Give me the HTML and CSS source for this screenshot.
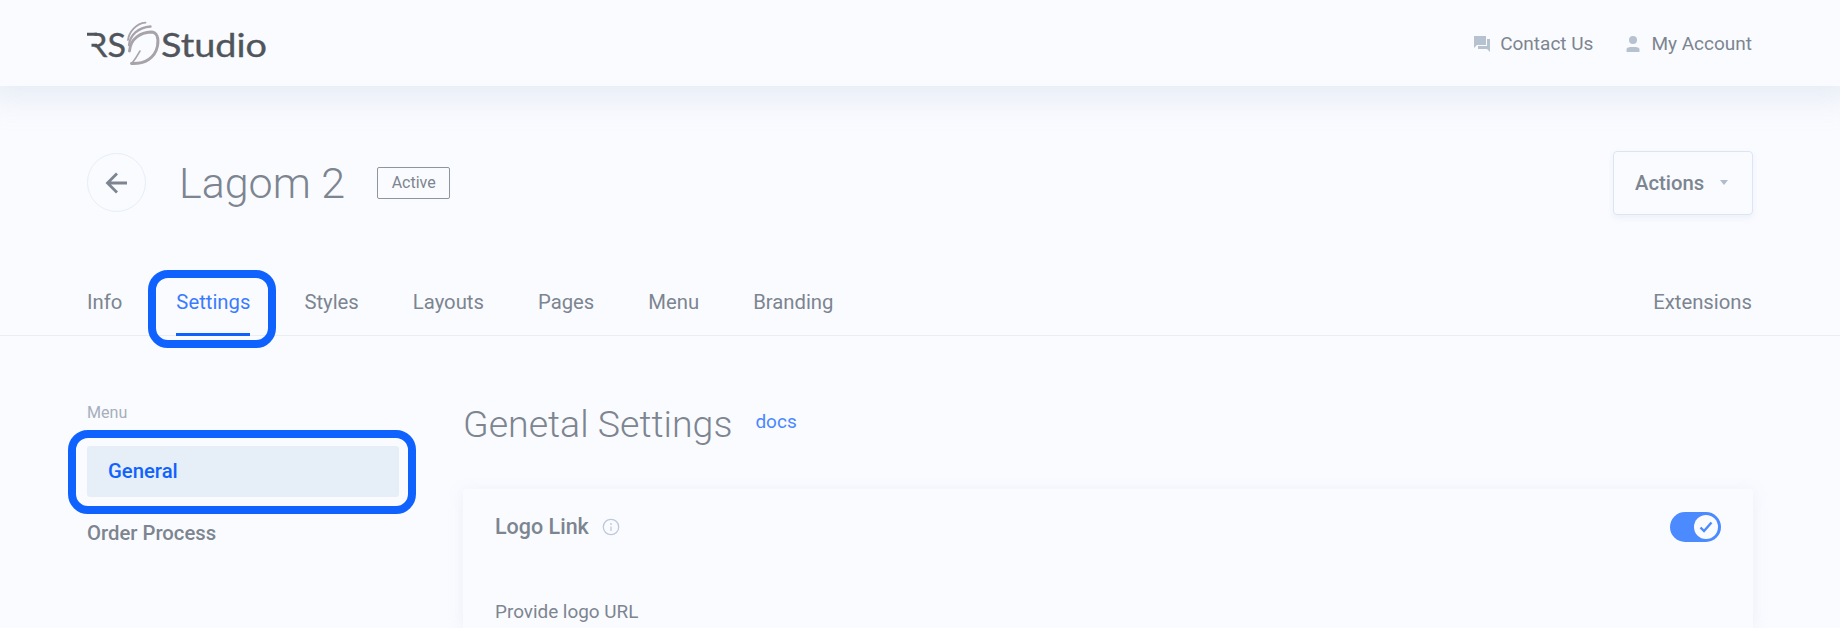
FILE: index.html
```html
<!DOCTYPE html>
<html lang="en">
<head>
<meta charset="utf-8">
<title>Lagom 2 - Settings</title>
<link rel="stylesheet" href="styles.css">
</head>
<body>
<header class="topbar">
  <svg class="logo" width="184" height="52" viewBox="0 0 184 52" role="img" aria-label="RS Studio">
    <g class="logo-text">
      <text x="-1" y="36.5" textLength="21.500" lengthAdjust="spacingAndGlyphs">R</text>
      <text x="20.500" y="36.5" textLength="18.500" lengthAdjust="spacingAndGlyphs">S</text>
      <text x="74" y="36.5" textLength="106" lengthAdjust="spacingAndGlyphs">Studio</text>
    </g>
    <rect class="logo-gap" x="-1" y="9" width="8.500" height="30"/>
    <path class="logo-bar" d="M0 14.200H10M4.500 25.300H10"/>
    <g class="logo-leaf">
      <path d="M41 20C42 12 49 3.500 58.500 2.700" stroke-width="1.800"/>
      <path d="M42 25C43 15 51 7.500 63.500 6.500" stroke-width="2.300"/>
      <path d="M42.500 31C43.500 18 54 12.500 64 12C70 12 72 18 70.500 26C68 38 58 44 44.500 43.500" stroke-width="2.900"/>
      <path d="M44.500 43.500C48 40 50.500 35 53 31" stroke-width="1.500"/>
    </g>
  </svg>
  <nav class="account">
    <a class="account-link"><svg width="18" height="18" viewBox="0 0 18 18"><path d="M1 1h12v9H4l-3 3zM14 4h3v13l-3-3H5v-3h9z"/></svg>Contact Us</a>
    <a class="account-link user"><svg width="14" height="18" viewBox="0 0 14 18"><circle cx="7" cy="5" r="4"/><path d="M0.500 17v-2.500C0.500 12.500 3 12 7 12s6.500 .5 6.500 2.500V17z"/></svg>My Account</a>
  </nav>
</header>
<main>
  <section class="title-row">
    <a class="back"><svg width="24" height="24" viewBox="0 0 24 24"><path d="M22 12H3M12 2.500L2.500 12L12 21.500"/></svg></a>
    <h1>Lagom 2</h1>
    <span class="badge">Active</span>
    <button class="actions">Actions<i class="caret"></i></button>
  </section>
  <nav class="tabs">
    <a>Info</a>
    <a class="current">Settings</a>
    <a>Styles</a>
    <a>Layouts</a>
    <a>Pages</a>
    <a>Menu</a>
    <a>Branding</a>
    <a class="last">Extensions</a>
  </nav>
  <div class="content">
    <aside class="sidebar">
      <div class="caption">Menu</div>
      <a class="item selected">General</a>
      <a class="item">Order Process</a>
    </aside>
    <section class="panel">
      <div class="panel-head"><h2>Genetal Settings</h2><a class="docs">docs</a></div>
      <div class="card">
        <div class="card-head">
          <span class="card-title">Logo Link</span>
          <svg class="info" width="18" height="18" viewBox="0 0 18 18"><circle cx="9" cy="9" r="7.700"/><path d="M9 5v2M9 8.500v4.500"/></svg>
          <span class="toggle"><span class="knob"><svg width="14" height="12" viewBox="0 0 14 12"><path d="M1.500 6.500L5 10L12.500 1.500"/></svg></span></span>
        </div>
        <div class="label">Provide logo URL</div>
      </div>
    </section>
  </div>
</main>
</body>
</html>
```
FILE: styles.css
```css
* { box-sizing: border-box; }
body {
  margin: 0;
  height: 628px;
  overflow: hidden;
  background: #fafbff;
  color: #7c8590;
  font-family: Roboto, "Liberation Sans", sans-serif;
  font-size: 20.3px;
}
h1, h2 { margin: 0; font-weight: 300; }

.topbar {
  position: relative;
  display: flex;
  align-items: flex-start;
  justify-content: space-between;
  height: 86px;
  padding: 20px 88px 0 87px;
  background: #fafbff;
  box-shadow: 0 0 30px 14px rgba(160, 178, 205, .2);
}
.logo { display: block; }
.logo-text { fill: #50555c; stroke: #50555c; stroke-width: .35; font: 400 33px Lato, sans-serif; }
.logo-gap { fill: #fafbff; }
.logo-bar { stroke: #50555c; stroke-width: 3; fill: none; }
.logo-leaf { fill: none; stroke: #a8a3ab; stroke-linecap: round; stroke-linejoin: round; }
.account { display: flex; gap: 33px; font-size: 19px; line-height: 22px; padding-top: 12.5px; }
.account-link { display: flex; align-items: center; gap: 9px; }
.account-link.user { gap: 11px; }
.account-link svg { fill: #b7c2d0; }

.title-row { display: flex; align-items: center; height: 193px; padding: 0 87px; }
.back {
  display: flex;
  align-items: center;
  justify-content: center;
  width: 59px;
  height: 59px;
  border: 1px solid #e6eef8;
  border-radius: 50%;
}
.back svg { fill: none; stroke: #7c8590; stroke-width: 2.8; }
h1 { margin-left: 33px; padding-top: 1px; font-size: 43px; line-height: 50px; }
.badge {
  margin-left: 32px;
  width: 73px;
  height: 32px;
  border: 1.5px solid #8d959f;
  border-radius: 2px;
  font-size: 16px;
  line-height: 29px;
  text-align: center;
}
.actions {
  display: flex;
  align-items: center;
  gap: 16px;
  width: 140px;
  height: 64px;
  margin-left: auto;
  padding: 0 21px;
  border: 1px solid #dbe6f4;
  border-radius: 4px;
  background: #fafbff;
  box-shadow: 0 3px 6px rgba(160, 178, 205, .14);
  color: inherit;
  font: 500 20.3px Roboto, sans-serif;
}
.caret { border: 4px solid transparent; border-top: 5px solid #b0bccb; border-bottom: 0; }

.tabs {
  display: flex;
  gap: 54px;
  height: 57px;
  padding: 0 88px 0 87px;
  border-bottom: 1px solid #e9edf4;
  line-height: 46px;
}
.current { position: relative; height: 57px; border-bottom: 3px solid #1062fe; color: #3a7bff; }
.last { margin-left: auto; }
.current::after {
  content: "";
  position: absolute;
  inset: -9px -26px -15px -28px;
  border: 8px solid #1062fe;
  border-radius: 20px;
}

.content { display: flex; padding: 0 87px; gap: 64px; }
.sidebar { width: 312px; padding-top: 65px; font-weight: 500; }
.caption { height: 45px; font-size: 16.1px; line-height: 24px; font-weight: 400; color: #a5afbb; }
.item { display: block; height: 51px; line-height: 51px; }
.selected {
  position: relative;
  margin-bottom: 11px;
  padding-left: 21px;
  border-radius: 3px;
  background: #e6eef8;
  color: #1062fe;
}
.selected::after {
  content: "";
  position: absolute;
  inset: -16px -17px -17px -19px;
  border: 8px solid #1062fe;
  border-radius: 20px;
}
.panel { flex: 1; padding-top: 61px; }
.panel-head { display: flex; gap: 23px; height: 92px; }
h2 { font-size: 37.5px; line-height: 54px; }
.docs { color: #4a87ff; font-size: 19px; line-height: 50px; }
.card {
  height: 139px;
  padding: 23px 32px 0;
  border-radius: 3px 3px 0 0;
  background: #fafbff;
  box-shadow: 0 2px 16px rgba(160, 178, 205, .17);
}
.card-head { display: flex; align-items: center; height: 30px; }
.card-title { margin-top: -2px; font-size: 21.5px; font-weight: 500; }
.info { margin-left: 13px; fill: none; stroke: #bcc9dc; stroke-width: 1.3; }
.toggle {
  display: flex;
  justify-content: flex-end;
  align-items: center;
  width: 51px;
  height: 30px;
  margin-left: auto;
  padding: 3px;
  border-radius: 15px;
  background: #4c8aff;
}
.knob { display: flex; align-items: center; justify-content: center; width: 24px; height: 24px; border-radius: 50%; background: #fafbff; }
.knob svg { fill: none; stroke: #4c8aff; stroke-width: 2.4; }
.label { margin-top: 58px; font-size: 18.9px; line-height: 24px; }
```
